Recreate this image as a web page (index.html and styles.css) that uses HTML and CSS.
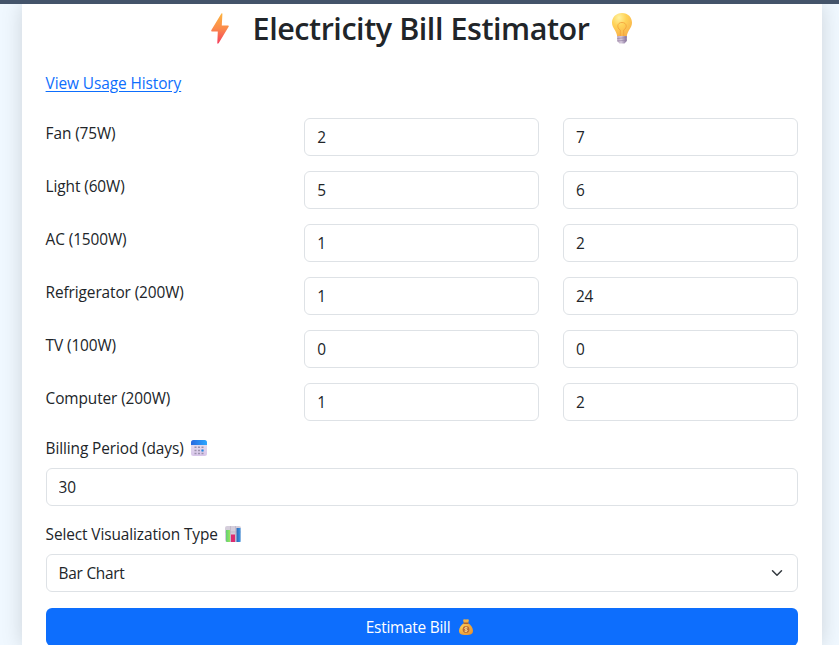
FILE: index.html
```
<!DOCTYPE html>
<html lang="en">
<head>
<meta charset="utf-8">
<title>Electricity Bill Estimator</title>
<link rel="stylesheet" href="styles.css">
</head>
<body>
<div class="navbar"></div>
<main class="card">
  <h1>
    <svg class="bolt" viewBox="0 0 18 31"><defs><linearGradient id="b" x1="0" y1="0" x2="0" y2="1"><stop stop-color="#fcb43f"/><stop offset=".5" stop-color="#fb8a4c"/><stop offset="1" stop-color="#f43b5c"/></linearGradient></defs><path fill="url(#b)" d="M10.4.4Q11.5-.2 11.4 1L10.800 12.400H17Q18.200 12.500 17.600 13.700L7.800 30Q6.400 31.600 6.300 30L6.800 18.500H.9Q-.2 18.300.4 17Z"/></svg>
    <span class="title">Electricity Bill Estimator</span>
    <svg class="bulb" viewBox="0 0 20 31"><defs><radialGradient id="y" cx=".35" cy=".2" r=".8"><stop stop-color="#fff2a0"/><stop offset=".45" stop-color="#ffd358"/><stop offset="1" stop-color="#f9b34b"/></radialGradient><linearGradient id="p"><stop stop-color="#b9a3bd"/><stop offset=".4" stop-color="#d5c9dc"/><stop offset="1" stop-color="#85709b"/></linearGradient></defs><path fill="url(#y)" d="M10 0C4 0 0 4.300 0 9.800c0 5.200 4.500 7.400 5.200 13.700h9.600C15.500 17.200 20 15 20 9.800 20 4.300 16 0 10 0Z"/><path fill="none" stroke="#f4a43c" stroke-width=".9" d="M8.300 23V17C4.500 15 5 9.500 10 9.500s5.500 5.500 1.700 7.500v6"/><path fill="url(#p)" d="M5.200 23h9.600v5L12.500 30.500h-5L5.200 28Z"/><path stroke="#907d9f" stroke-width=".6" d="M5.200 25.500l9.600-1M5.200 28l9.600-1"/></svg>
  </h1>
  <a class="history" href="#">View Usage History</a>
  <form>
    <div class="row"><label>Fan (75W)</label><input value="2"><input value="7"></div>
    <div class="row"><label>Light (60W)</label><input value="5"><input value="6"></div>
    <div class="row"><label>AC (1500W)</label><input value="1"><input value="2"></div>
    <div class="row"><label>Refrigerator (200W)</label><input value="1"><input value="24"></div>
    <div class="row"><label>TV (100W)</label><input value="0"><input value="0"></div>
    <div class="row"><label>Computer (200W)</label><input value="1"><input value="2"></div>
    <div class="group">
      <label class="wide"><span>Billing Period (days)</span>
        <svg class="icon" viewBox="0 0 16 16"><defs><linearGradient id="c"><stop stop-color="#2869df"/><stop offset="1" stop-color="#2aa7ff"/></linearGradient><linearGradient id="d" x2="0" y2="1"><stop stop-color="#e8e4ef"/><stop offset="1" stop-color="#d8c5ea"/></linearGradient></defs><rect width="16" height="16" rx="2.500" fill="url(#d)"/><path fill="url(#c)" d="M0 5V2.500Q0 0 2.500 0h11Q16 0 16 2.500V5Z"/><path stroke="#9c92ad" stroke-width="1.600" stroke-dasharray="2 1.500" d="M3.500 7.300h9M3.500 10.500h9M3.500 13.500h9"/><path fill="#1689e8" d="M10.500 9.500h2v2h-2z"/></svg></label>
      <input value="30">
    </div>
    <div class="group">
      <label class="wide"><span>Select Visualization Type</span>
        <svg class="icon" viewBox="0 0 16 16"><defs><linearGradient id="g"><stop stop-color="#62cf76"/><stop offset="1" stop-color="#96e65c"/></linearGradient><linearGradient id="u"><stop stop-color="#2b66b5"/><stop offset="1" stop-color="#3a9ae8"/></linearGradient></defs><rect width="16" height="16" rx="2" fill="#d5cedb"/><path stroke="#bbb1c4" stroke-width=".7" d="M0 6h16M5.500 0v16M10.500 0v16"/><path fill="url(#g)" d="M1 4h4v12H2Q1 16 1 15Z"/><path fill="#dc2b70" d="M6 8.500h4V16H6z"/><path fill="url(#u)" d="M11.500 2H15.500v14H11.500z"/></svg></label>
      <div class="select"><span>Bar Chart</span><svg class="chevron" viewBox="0 0 16 16"><path fill="none" stroke="#343a40" stroke-width="2" stroke-linecap="round" stroke-linejoin="round" d="m2 5 6 6 6-6"/></svg></div>
    </div>
    <button type="button"><span>Estimate Bill</span>
      <svg class="bag" viewBox="0 0 14 16"><defs><radialGradient id="m" cx=".3" cy=".35" r=".8"><stop stop-color="#ffce55"/><stop offset="1" stop-color="#e8922f"/></radialGradient></defs><path fill="#f3b143" d="M4 .8Q5.500 0 7 .6 8.500 0 10 .8L9.200 4H4.800Z"/><path fill="url(#m)" d="M5 4h4c2.500 1.700 5 4.700 5 7.700 0 3-2 4.300-7 4.300s-7-1.300-7-4.300C0 8.700 2.500 5.700 5 4Z"/><path stroke="#9d5633" stroke-width="1.300" d="M4.500 4.200h5"/><circle cx="7" cy="10.500" r="3.400" fill="#b96b35"/><path fill="none" stroke="#ffdc8c" stroke-width=".9" d="M8.500 9Q7 8 5.900 9c-.6 1 .3 1.400 1.100 1.500s1.700.6 1.100 1.500Q7 13 5.500 12M7 7.800v5.400"/></svg></button>
  </form>
</main>
</body>
</html>
```
FILE: styles.css
```
* { box-sizing: border-box; }
html { overflow: hidden; }
body {
  margin: 0;
  height: 645px;
  overflow: hidden;
  background: #f0f8ff;
  color: #212529;
  font: 15.4px/24px "Segoe UI", "Open Sans", "Noto Sans", sans-serif;
  letter-spacing: -0.25px;
}
.navbar {
  position: relative;
  z-index: 1;
  height: 4px;
  background: #44546a;
}
.card {
  width: 800px;
  height: 642px;
  margin-left: 21.6px;
  padding: 6px 24px 0;
  background: #fff;
  box-shadow: 0 0 20px rgba(0, 0, 0, 0.15);
}
h1 {
  display: flex;
  align-items: center;
  height: 38px;
  margin: 0 0 23px;
  padding-left: 165px;
  font-size: 30.5px;
  font-weight: 600;
  line-height: 36px;
  letter-spacing: -0.45px;
}
.title {
  width: 338px;
  height: 38px;
  margin: 0 21px 0 24px;
  white-space: nowrap;
}
svg { display: block; flex: none; }
.bolt, .bulb { height: 31px; margin-bottom: 2px; }
.bolt { width: 18px; }
.bulb { width: 20px; }
.history {
  display: block;
  width: max-content;
  color: #0d6efd;
  letter-spacing: -0.08px;
  line-height: 25px;
  text-underline-offset: 2px;
}
form { padding-top: 22px; }
label { letter-spacing: -0.1px; }
.row {
  display: grid;
  grid-template-columns: repeat(3, minmax(0, 1fr));
  gap: 24px;
  margin-bottom: 15px;
}
.row label { padding-top: 4px; }
input, .select {
  display: block;
  width: 100%;
  height: 38px;
  padding: 6px 12px;
  border: 1px solid #dee2e6;
  border-radius: 6px;
  background: #fff;
  color: inherit;
  font: inherit;
  letter-spacing: inherit;
}
.group { margin-bottom: 16px; }
.wide {
  display: flex;
  align-items: center;
  gap: 7px;
  margin-bottom: 8px;
}
.wide span, .select span, button span { padding-top: 2px; line-height: 22px; }
.icon { width: 16px; height: 16px; }
.select {
  display: flex;
  align-items: center;
  justify-content: space-between;
}
.chevron { width: 16px; height: 12px; }
button {
  display: flex;
  align-items: center;
  justify-content: center;
  gap: 9px;
  width: 100%;
  height: 38px;
  padding: 0 4px 0 0;
  border: 0;
  border-radius: 6px;
  background: #0d6efd;
  color: #fff;
  font: inherit;
  letter-spacing: inherit;
}
.bag { width: 14px; height: 16px; }
```
